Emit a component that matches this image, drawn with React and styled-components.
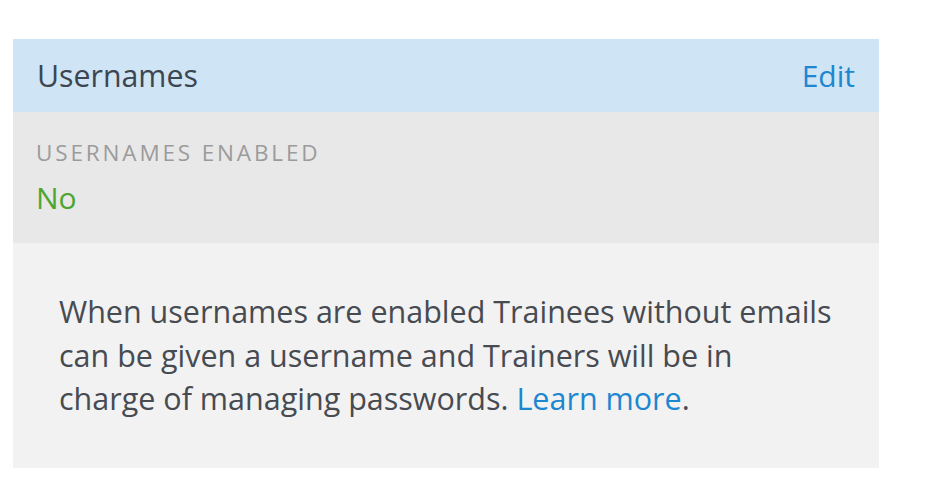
import * as React from "react";
import styled, { createGlobalStyle } from "styled-components";

const Global = createGlobalStyle`
  body {
    margin: 0;
    background: #fff;
    font-family: "Open Sans", "Noto Sans", sans-serif;
  }
`;

const Page = styled.div`
  padding: 39px 55px 27px 13px;
`;

const Card = styled.section`
  width: 866px;
`;

const Header = styled.div`
  display: flex;
  align-items: center;
  justify-content: space-between;
  height: 73px;
  padding: 0 24px;
  box-sizing: border-box;
  background: #cfe4f5;
`;

const Title = styled.h2`
  margin: 0;
  font-size: 30.3px;
  font-weight: 400;
  color: #3d4650;
`;

const Link = styled.a`
  color: #1d87d0;
  text-decoration: none;
  font-size: ${(p) => p.size || "inherit"};
`;

const Setting = styled.div`
  background: #e8e8e8;
  height: 131px;
  box-sizing: border-box;
  padding: 26px 23px 0;
`;

const Label = styled.div`
  font-size: 22.5px;
  letter-spacing: 2.85px;
  color: #9b9b9b;
  line-height: 30px;
`;

const Value = styled.div`
  font-size: 30px;
  color: #4ca62e;
  margin-top: 11px;
  line-height: 38px;
`;

const Note = styled.div`
  background: #f2f2f2;
  height: 225px;
  box-sizing: border-box;
  padding: 47px 46px 0;
`;

const Text = styled.p`
  margin: 0;
  font-size: 30.5px;
  line-height: 43.5px;
  color: #474b51;
`;

export default function App() {
  return (
    <Page>
      <Global />
      <Card>
        <Header>
          <Title>Usernames</Title>
          <Link href="#" size="30px">Edit</Link>
        </Header>
        <Setting>
          <Label>USERNAMES ENABLED</Label>
          <Value>No</Value>
        </Setting>
        <Note>
          <Text>
            When usernames are enabled Trainees without emails can be given a
            username and Trainers will be in charge of managing passwords.{" "}
            <Link href="#">Learn more</Link>.
          </Text>
        </Note>
      </Card>
    </Page>
  );
}
